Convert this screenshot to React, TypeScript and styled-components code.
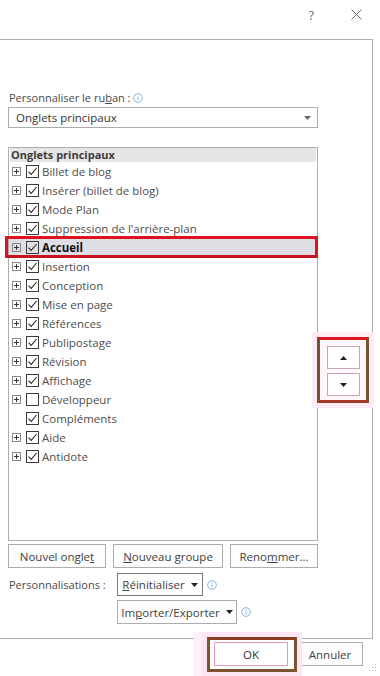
import React from "react";
import styled, { createGlobalStyle } from "styled-components";

const GlobalStyle = createGlobalStyle`
  html, body {
    margin: 0;
    padding: 0;
    background: #ffffff;
  }
  body {
    font-family: "Open Sans", "Noto Sans", sans-serif;
    color: #474747;
  }
  * {
    box-sizing: border-box;
  }
`;

const Dialog = styled.div`
  position: relative;
  width: 380px;
  height: 676px;
  background: #ffffff;
  overflow: hidden;
  display: flex;
  flex-direction: column;
`;

const TitleBar = styled.div`
  height: 39px;
  display: flex;
  justify-content: flex-end;
  align-items: center;
  padding: 0 18px 10px 0;
  gap: 37px;
  color: #6d6d6d;
  font-size: 13px;
`;

const Panel = styled.div`
  width: 373px;
  height: 600px;
  border: 1px solid #adadad;
  border-left: none;
  display: flex;
`;

const MainColumn = styled.div`
  width: 318px;
  padding: 50px 0 0 8px;
  display: flex;
  flex-direction: column;
`;

const Label = styled.div`
  display: flex;
  align-items: center;
  gap: 3px;
  margin-left: 1px;
  height: 15px;
  font-size: 11px;
  color: #4a4a4a;
`;

const Select = styled.div`
  margin-top: 2px;
  height: 21px;
  border: 1px solid #ababab;
  display: flex;
  align-items: center;
  justify-content: space-between;
  padding: 0 6px 0 7px;
  font-size: 11.5px;
  color: #333;
`;

const ListBox = styled.div`
  margin-top: 19px;
  height: 394px;
  border: 1px solid #abadb3;
  display: flex;
  flex-direction: column;
`;

const ListHeader = styled.div`
  height: 14px;
  margin: 0 1px;
  padding-left: 1px;
  background: #e6e6e6;
  font-size: 11px;
  font-weight: 700;
  line-height: 14px;
  color: #3c3c3c;
`;

const Row = styled.div<{ $selected?: boolean }>`
  position: relative;
  height: 19px;
  display: flex;
  align-items: center;
  padding-left: 3px;
  font-size: 11.5px;
  color: ${(p) => (p.$selected ? "#111" : "#4e4e4e")};
  font-weight: ${(p) => (p.$selected ? 700 : 400)};
  background: ${(p) => (p.$selected ? "#dedee4" : "transparent")};

  &::after {
    content: "";
    display: ${(p) => (p.$selected ? "block" : "none")};
    position: absolute;
    top: -2px;
    bottom: -1px;
    left: -4px;
    right: -1px;
    border: 3px solid #dc1420;
    border-bottom-color: #c8121d;
    border-radius: 1px;
  }
`;

const Expander = styled.span<{ $hidden?: boolean }>`
  position: relative;
  width: 9px;
  height: 9px;
  margin-right: 5px;
  border: 1px solid #8a8a8a;
  visibility: ${(p) => (p.$hidden ? "hidden" : "visible")};

  &::before,
  &::after {
    content: "";
    position: absolute;
    background: #333;
  }
  &::before {
    left: 1px;
    right: 1px;
    top: 3px;
    height: 1px;
  }
  &::after {
    top: 1px;
    bottom: 1px;
    left: 3px;
    width: 1px;
  }
`;

const CheckBox = styled.span`
  width: 13px;
  height: 13px;
  margin-right: 3px;
  border: 1px solid #3a3a3a;
  display: flex;
  align-items: center;
  justify-content: center;
`;

const ButtonRow = styled.div`
  margin-top: 3px;
  display: flex;
  justify-content: space-between;
`;

const Button = styled.div<{ $w: number; $h?: number; $dark?: boolean }>`
  width: ${(p) => p.$w}px;
  height: ${(p) => p.$h ?? 24}px;
  border: 1px solid ${(p) => (p.$dark ? "#7a7a7a" : "#adadad")};
  background: #fdfdfd;
  display: flex;
  align-items: center;
  justify-content: center;
  gap: 6px;
  font-size: 11.5px;
  color: #3f3f3f;
`;

const CustomGrid = styled.div`
  margin-top: 5px;
  display: grid;
  grid-template-columns: 109px auto;
  row-gap: 4px;
  align-items: center;
`;

const GridLabel = styled.div`
  font-size: 11px;
  color: #4a4a4a;
  padding-left: 1px;
`;

const InlineGroup = styled.div<{ $col?: number }>`
  grid-column: ${(p) => p.$col ?? "auto"};
  display: flex;
  align-items: center;
  gap: 4px;
`;

const SideColumn = styled.div`
  flex: 1;
  padding-top: 297px;
  margin-left: -1px;
`;

const MoveFrame = styled.div`
  width: 52px;
  height: 66px;
  border: 3px solid #76522f;
  border-top-color: #e0161f;
  border-bottom-color: #a33a25;
  background: #fff7fc;
  box-shadow: 0 0 0 5px #fdebf6;
  padding: 6px 0 0 7px;
  display: flex;
  flex-direction: column;
  gap: 4px;
`;

const MoveButton = styled.div`
  width: 33px;
  height: 23px;
  border: 1px solid #c8a4b6;
  background: #ffffff;
  display: flex;
  align-items: center;
  justify-content: center;
`;

const Footer = styled.div`
  margin-top: -2px;
  display: flex;
  justify-content: flex-end;
  align-items: flex-start;
  padding-right: 17px;
`;

const OkFrame = styled.div`
  position: relative;
  z-index: 1;
  border: 3px solid #7a5331;
  border-top-color: #8c3c24;
  padding: 2px 6px 3px 4px;
  background: #fff;
  box-shadow: 0 0 0 5px #fde6f4, -8px 0 0 5px #fdeef8;
`;

const OkButton = styled.div`
  width: 74px;
  height: 24px;
  border: 1px solid #e59ab6;
  display: flex;
  align-items: center;
  justify-content: center;
  font-size: 11.5px;
  color: #333;
`;

const CancelButton = styled(Button)`
  margin-top: 5px;
`;

const Grip = styled.svg`
  position: absolute;
  right: 3px;
  bottom: 4px;
`;

const Info = () => (
  <svg width="10" height="10" viewBox="0 0 10 10">
    <circle cx="5" cy="5" r="4.3" fill="none" stroke="#79a7da" strokeWidth="0.9" />
    <rect x="4.55" y="4.2" width="0.9" height="3.2" fill="#79a7da" />
    <rect x="4.55" y="2.5" width="0.9" height="0.9" fill="#79a7da" />
  </svg>
);

const Caret = ({ color = "#222" }: { color?: string }) => (
  <svg width="7" height="4" viewBox="0 0 7 4">
    <path d="M0 0 L7 0 L3.5 4 Z" fill={color} />
  </svg>
);

const Check = () => (
  <svg width="11" height="11" viewBox="0 0 11 11">
    <path d="M1.5 5.6 L4.2 8.4 L9.6 2" fill="none" stroke="#2b2b2b" strokeWidth="1.1" />
  </svg>
);

type Tab = { name: string; checked: boolean; expandable: boolean; selected?: boolean };

const tabs: Tab[] = [
  { name: "Billet de blog", checked: true, expandable: true },
  { name: "Insérer (billet de blog)", checked: true, expandable: true },
  { name: "Mode Plan", checked: true, expandable: true },
  { name: "Suppression de l'arrière-plan", checked: true, expandable: true },
  { name: "Accueil", checked: true, expandable: true, selected: true },
  { name: "Insertion", checked: true, expandable: true },
  { name: "Conception", checked: true, expandable: true },
  { name: "Mise en page", checked: true, expandable: true },
  { name: "Références", checked: true, expandable: true },
  { name: "Publipostage", checked: true, expandable: true },
  { name: "Révision", checked: true, expandable: true },
  { name: "Affichage", checked: true, expandable: true },
  { name: "Développeur", checked: false, expandable: true },
  { name: "Compléments", checked: true, expandable: false },
  { name: "Aide", checked: true, expandable: true },
  { name: "Antidote", checked: true, expandable: true },
];

const App: React.FC = () => {
  return (
    <Dialog>
      <GlobalStyle />
      <TitleBar>
        <span>?</span>
        <svg width="11" height="11" viewBox="0 0 11 11">
          <path d="M0.5 0.5 L10.5 10.5 M10.5 0.5 L0.5 10.5" stroke="#6d6d6d" strokeWidth="1" />
        </svg>
      </TitleBar>

      <Panel>
        <MainColumn>
          <Label>
            <span>
              Personnaliser le ru<u>b</u>an :
            </span>
            <Info />
          </Label>
          <Select>
            <span>Onglets principaux</span>
            <Caret color="#666" />
          </Select>

          <ListBox>
            <ListHeader>Onglets principaux</ListHeader>
            {tabs.map((t) => (
              <Row key={t.name} $selected={t.selected}>
                <Expander $hidden={!t.expandable} />
                <CheckBox>{t.checked && <Check />}</CheckBox>
                <span>{t.name}</span>
              </Row>
            ))}
          </ListBox>

          <ButtonRow>
            <Button $w={98}>
              <span>
                Nouvel ongle<u>t</u>
              </span>
            </Button>
            <Button $w={110}>
              <span>
                <u>N</u>ouveau groupe
              </span>
            </Button>
            <Button $w={88}>
              <span>
                Reno<u>m</u>mer...
              </span>
            </Button>
          </ButtonRow>

          <CustomGrid>
            <GridLabel>Personnalisations :</GridLabel>
            <InlineGroup>
              <Button $w={86} $h={23} $dark>
                <span>
                  <u>R</u>éinitialiser
                </span>
                <Caret />
              </Button>
              <Info />
            </InlineGroup>
            <InlineGroup $col={2}>
              <Button $w={120}>
                <span>
                  Im<u>p</u>orter/Exporter
                </span>
                <Caret />
              </Button>
              <Info />
            </InlineGroup>
          </CustomGrid>
        </MainColumn>

        <SideColumn>
          <MoveFrame>
            <MoveButton>
              <svg width="7" height="4" viewBox="0 0 7 4">
                <path d="M0 4 L7 4 L3.5 0 Z" fill="#222" />
              </svg>
            </MoveButton>
            <MoveButton>
              <Caret />
            </MoveButton>
          </MoveFrame>
        </SideColumn>
      </Panel>

      <Footer>
        <OkFrame>
          <OkButton>OK</OkButton>
        </OkFrame>
        <CancelButton $w={66}>Annuler</CancelButton>
      </Footer>

      <Grip width="8" height="8" viewBox="0 0 8 8">
        <rect x="6" y="0" width="1" height="1" fill="#b5b5b5" />
        <rect x="3" y="3" width="1" height="1" fill="#b5b5b5" />
        <rect x="6" y="3" width="1" height="1" fill="#b5b5b5" />
        <rect x="0" y="6" width="1" height="1" fill="#b5b5b5" />
        <rect x="3" y="6" width="1" height="1" fill="#b5b5b5" />
        <rect x="6" y="6" width="1" height="1" fill="#b5b5b5" />
      </Grip>
    </Dialog>
  );
};

export default App;
